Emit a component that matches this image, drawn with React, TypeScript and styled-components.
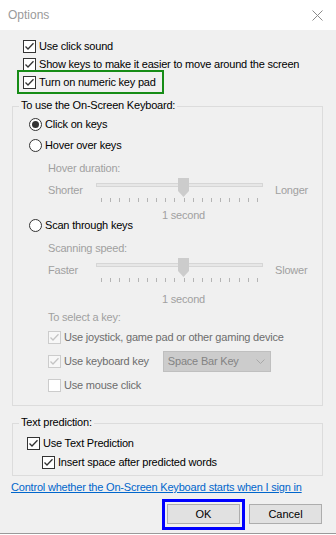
import React from 'react';
import styled, { createGlobalStyle } from 'styled-components';

const FONT = `"Liberation Sans", Arial, sans-serif`;

const Global = createGlobalStyle`
  html, body {
    margin: 0;
    padding: 0;
    background: #ffffff;
  }
  body {
    font-family: ${FONT};
    font-size: 11px;
    letter-spacing: -0.2px;
    color: #000;
  }
`;

const Window = styled.div`
  width: 336px;
  display: flex;
  flex-direction: column;
  background: #ffffff;
`;

const TitleBar = styled.div`
  height: 30px;
  display: flex;
  align-items: center;
  justify-content: space-between;
  padding: 0 13px 0 8px;
  box-sizing: border-box;
  background: #ffffff;
`;

const Title = styled.span`
  font-size: 12px;
  letter-spacing: 0;
  color: #9a9a9a;
`;

const Body = styled.div`
  background: #f0f0f0;
  display: flex;
  flex-direction: column;
  padding: 7px 0 3px;
  border-bottom: 1px solid #9a9a9a;
`;

const TopOptions = styled.div`
  display: flex;
  flex-direction: column;
  padding-left: 23px;
`;

const Row = styled.div<{ $mt?: number; $ml?: number }>`
  height: 18px;
  display: flex;
  align-items: center;
  gap: 3px;
  margin-top: ${p => p.$mt ?? 0}px;
  margin-left: ${p => p.$ml ?? 0}px;
  white-space: nowrap;
`;

const GreenMark = styled.div`
  align-self: flex-start;
  margin: -3px 0 0 -6px;
  padding: 1px 6px 1px 4px;
  border: 2px solid #168c16;
`;

const Label = styled.span<{ $tone?: 'normal' | 'dim' | 'faint' }>`
  color: ${p => (p.$tone === 'dim' ? '#6d6d6d' : p.$tone === 'faint' ? '#a0a0a0' : '#000')};
`;

const Box = styled.span<{ $disabled?: boolean; $fill?: string }>`
  width: 13px;
  height: 13px;
  box-sizing: border-box;
  flex: none;
  display: flex;
  align-items: center;
  justify-content: center;
  border: 1px solid ${p => (p.$disabled ? '#cccccc' : '#333333')};
  background: ${p => p.$fill ?? '#ffffff'};
`;

const Radio = styled.span<{ $on?: boolean }>`
  width: 13px;
  height: 13px;
  box-sizing: border-box;
  flex: none;
  border-radius: 50%;
  border: 1px solid #333333;
  background: #ffffff;
  display: flex;
  align-items: center;
  justify-content: center;
  &::after {
    content: '';
    width: 7px;
    height: 7px;
    border-radius: 50%;
    background: #333333;
    display: ${p => (p.$on ? 'block' : 'none')};
  }
`;

const Group = styled.div<{ $mt: number; $pb: number }>`
  margin: ${p => p.$mt}px 13px 0 12px;
  border: 1px solid #dcdcdc;
  padding-bottom: ${p => p.$pb}px;
  display: flex;
  flex-direction: column;
`;

const Legend = styled.div`
  align-self: flex-start;
  height: 15px;
  line-height: 15px;
  margin: -9px 0 0 6px;
  padding: 0 2px;
  background: #f0f0f0;
`;

const Text = styled.div<{ $mt: number; $ml: number }>`
  height: 16px;
  line-height: 16px;
  margin-top: ${p => p.$mt}px;
  margin-left: ${p => p.$ml}px;
  color: #a0a0a0;
  white-space: nowrap;
`;

const SliderRow = styled.div<{ $mt: number }>`
  display: flex;
  align-items: flex-start;
  margin-top: ${p => p.$mt}px;
  padding-left: 35px;
  height: 26px;
`;

const SliderEnd = styled.span<{ $ml?: number }>`
  width: 48px;
  margin: 4px 0 0 ${p => p.$ml ?? 0}px;
  line-height: 16px;
  color: #a0a0a0;
  flex: none;
`;

const Caption = styled.div<{ $mt: number }>`
  margin: ${p => p.$mt}px 0 0 83px;
  width: 175px;
  height: 14px;
  line-height: 14px;
  text-align: center;
  color: #a0a0a0;
`;

const Select = styled.div`
  margin-left: 11px;
  width: 108px;
  height: 21px;
  box-sizing: border-box;
  border: 1px solid #bfbfbf;
  background: #cccccc;
  color: #838383;
  display: flex;
  align-items: center;
  justify-content: space-between;
  padding: 0 5px 0 4px;
  flex: none;
`;

const LinkText = styled.a`
  margin: 4px 0 0 11px;
  height: 14px;
  line-height: 14px;
  color: #0066cc;
  text-decoration: underline;
  white-space: nowrap;
  cursor: pointer;
`;

const Footer = styled.div`
  margin-top: 5px;
  display: flex;
  justify-content: flex-end;
  align-items: flex-start;
  gap: 4px;
  padding-right: 14px;
`;

const FocusMark = styled.div`
  border: 3px solid #0000ff;
  padding: 2px 2px 3px 2px;
  display: flex;
`;

const Button = styled.button<{ $mt?: number }>`
  width: 73px;
  height: 20px;
  margin-top: ${p => p.$mt ?? 0}px;
  box-sizing: border-box;
  border: 1px solid #adadad;
  background: #e1e1e1;
  font-family: ${FONT};
  font-size: 11px;
  color: #000;
  padding: 0;
`;

function Check({ on = true, disabled = false }: { on?: boolean; disabled?: boolean }) {
  return (
    <Box $disabled={disabled} $fill={disabled && on ? '#f7f7f7' : undefined}>
      {on && (
        <svg width="11" height="11" viewBox="0 0 11 11">
          <path
            d="M1.5 5.5 L4 8 L9.5 2.2"
            fill="none"
            stroke={disabled ? '#c4c4c4' : '#333333'}
            strokeWidth="1.3"
          />
        </svg>
      )}
    </Box>
  );
}

function Slider() {
  const ticks = Array.from({ length: 18 }, (_, i) => 5 + (156 / 17) * i);
  return (
    <svg width="167" height="26" viewBox="0 0 167 26" style={{ flex: 'none' }}>
      <rect x="0.5" y="5.5" width="166" height="3" fill="#e7e7e7" stroke="#d6d6d6" />
      {ticks.map((x, i) => (
        <line key={i} x1={Math.round(x) + 0.5} x2={Math.round(x) + 0.5} y1="20" y2="24" stroke="#b4b4b4" />
      ))}
      <path d="M82 0 H93 V13 L87.5 19 L82 13 Z" fill="#cccccc" />
    </svg>
  );
}

export default function App() {
  return (
    <>
      <Global />
      <Window>
        <TitleBar>
          <Title>Options</Title>
          <svg width="11" height="11" viewBox="0 0 11 11">
            <path d="M0.5 0.5 L10.5 10.5 M10.5 0.5 L0.5 10.5" stroke="#8a8a8a" strokeWidth="1" />
          </svg>
        </TitleBar>
        <Body>
          <TopOptions>
            <Row>
              <Check />
              <Label>Use click sound</Label>
            </Row>
            <Row>
              <Check />
              <Label>Show keys to make it easier to move around the screen</Label>
            </Row>
            <GreenMark>
              <Row>
                <Check />
                <Label>Turn on numeric key pad</Label>
              </Row>
            </GreenMark>
          </TopOptions>

          <Group $mt={12} $pb={11}>
            <Legend>To use the On-Screen Keyboard:</Legend>
            <Row $mt={2} $ml={16}>
              <Radio $on />
              <Label>Click on keys</Label>
            </Row>
            <Row $mt={3} $ml={16}>
              <Radio />
              <Label>Hover over keys</Label>
            </Row>
            <Text $mt={6} $ml={35}>Hover duration:</Text>
            <SliderRow $mt={2}>
              <SliderEnd>Shorter</SliderEnd>
              <Slider />
              <SliderEnd $ml={12}>Longer</SliderEnd>
            </SliderRow>
            <Caption $mt={4}>1 second</Caption>
            <Row $mt={-6} $ml={16}>
              <Radio />
              <Label>Scan through keys</Label>
            </Row>
            <Text $mt={6} $ml={35}>Scanning speed:</Text>
            <SliderRow $mt={2}>
              <SliderEnd>Faster</SliderEnd>
              <Slider />
              <SliderEnd $ml={12}>Slower</SliderEnd>
            </SliderRow>
            <Caption $mt={8}>1 second</Caption>
            <Text $mt={3} $ml={35}>To select a key:</Text>
            <Row $mt={3} $ml={35}>
              <Check disabled />
              <Label $tone="dim">Use joystick, game pad or other gaming device</Label>
            </Row>
            <Row $mt={6} $ml={35}>
              <Check disabled />
              <Label $tone="dim">Use keyboard key</Label>
              <Select>
                <span>Space Bar Key</span>
                <svg width="9" height="5" viewBox="0 0 9 5">
                  <path d="M0.5 0.5 L4.5 4.5 L8.5 0.5" fill="none" stroke="#a8a8a8" />
                </svg>
              </Select>
            </Row>
            <Row $mt={6} $ml={35}>
              <Check on={false} disabled />
              <Label $tone="dim">Use mouse click</Label>
            </Row>
          </Group>

          <Group $mt={17} $pb={4}>
            <Legend>Text prediction:</Legend>
            <Row $mt={4} $ml={14}>
              <Check />
              <Label>Use Text Prediction</Label>
            </Row>
            <Row $mt={1} $ml={29}>
              <Check />
              <Label>Insert space after predicted words</Label>
            </Row>
          </Group>

          <LinkText>Control whether the On-Screen Keyboard starts when I sign in</LinkText>

          <Footer>
            <FocusMark>
              <Button>OK</Button>
            </FocusMark>
            <Button $mt={5}>Cancel</Button>
          </Footer>
        </Body>
      </Window>
    </>
  );
}
